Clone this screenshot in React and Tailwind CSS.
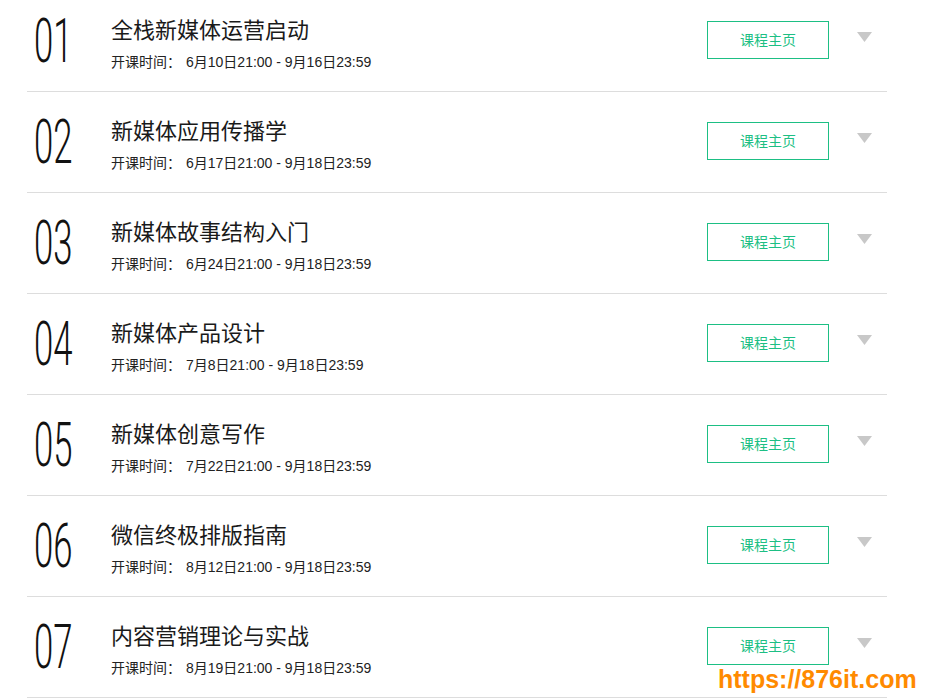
import React from "react";

const rows = [
  ["01", "全栈新媒体运营启动", "6月10日21:00 - 9月16日23:59"],
  ["02", "新媒体应用传播学", "6月17日21:00 - 9月18日23:59"],
  ["03", "新媒体故事结构入门", "6月24日21:00 - 9月18日23:59"],
  ["04", "新媒体产品设计", "7月8日21:00 - 9月18日23:59"],
  ["05", "新媒体创意写作", "7月22日21:00 - 9月18日23:59"],
  ["06", "微信终极排版指南", "8月12日21:00 - 9月18日23:59"],
  ["07", "内容营销理论与实战", "8月19日21:00 - 9月18日23:59"],
];

const cjk = { fontFamily: '"Liberation Sans", "Noto Sans CJK SC", sans-serif' };

export default function App() {
  return (
    <div className="relative w-[925px] h-[699px] overflow-hidden bg-white">
      <div className="ml-[27px] w-[860px] -mt-[9px]">
        {rows.map(([n, title, date]) => (
          <div key={n} className="flex h-[101px] border-b border-[#dddddd]">
            <div className="w-[84px] pl-[7px] pt-[19px]">
              <span
                className="inline-block origin-left scale-x-[0.56] text-[62px] leading-none font-light text-[#111]"
                style={{ fontFamily: 'Roboto, "Liberation Sans", sans-serif' }}
              >
                {n}
              </span>
            </div>
            <div className="flex-1 pt-[25px]" style={cjk}>
              <div className="text-[22px] leading-[30px] text-[#1a1a1a]">{title}</div>
              <div className="mt-[6px] text-[14px] leading-[20px] text-[#222]">
                <span>开课时间：</span>
                <span className="ml-[5px]">{date}</span>
              </div>
            </div>
            <div className="pt-[30px]">
              <div
                className="w-[122px] h-[38px] border border-[#1dbf84] flex items-center justify-center text-[14px] text-[#1dbf84]"
                style={cjk}
              >
                课程主页
              </div>
            </div>
            <div className="ml-[28px] mr-[15px] w-[15px] pt-[41px]">
              <svg width="15" height="10" viewBox="0 0 15 10">
                <polygon points="0,0 15,0 7.5,10" fill="#c8c8c8" />
              </svg>
            </div>
          </div>
        ))}
      </div>
      <div
        className="absolute left-[718px] top-[664px] text-[25px] font-bold leading-[30px] text-[#ff8a00]"
        style={{ fontFamily: '"Liberation Sans", sans-serif' }}
      >
        https://876it.com
      </div>
    </div>
  );
}
